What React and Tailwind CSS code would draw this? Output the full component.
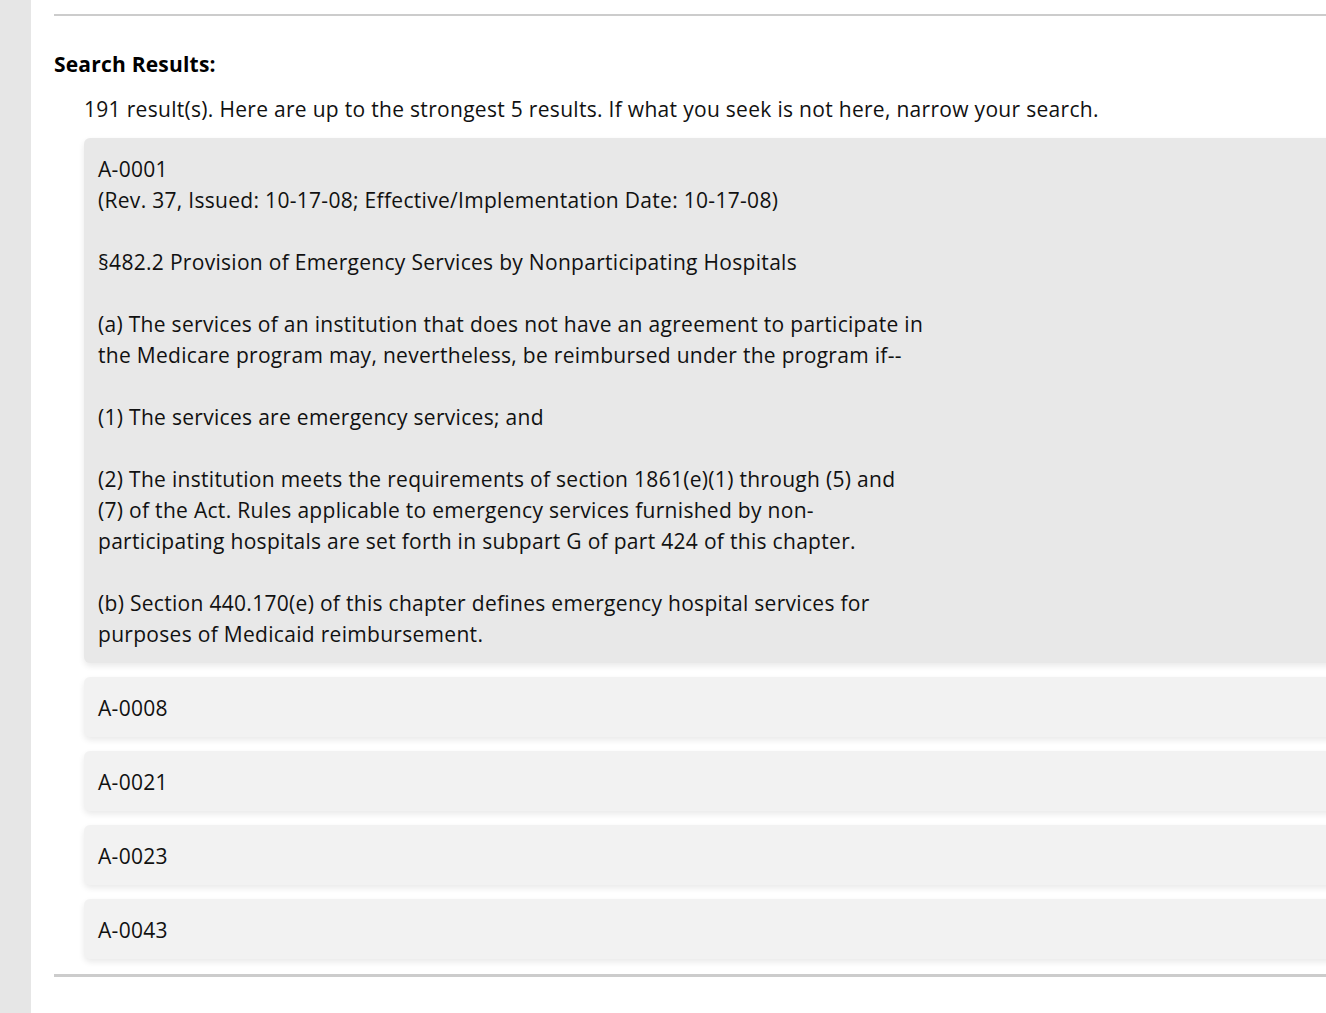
import React from "react";

const expanded = {
  id: "A-0001",
  paragraphs: [
    ["A-0001", "(Rev. 37, Issued: 10-17-08; Effective/Implementation Date: 10-17-08)"],
    ["§482.2 Provision of Emergency Services by Nonparticipating Hospitals"],
    [
      "(a) The services of an institution that does not have an agreement to participate in",
      "the Medicare program may, nevertheless, be reimbursed under the program if--",
    ],
    ["(1) The services are emergency services; and"],
    [
      "(2) The institution meets the requirements of section 1861(e)(1) through (5) and",
      "(7) of the Act. Rules applicable to emergency services furnished by non-",
      "participating hospitals are set forth in subpart G of part 424 of this chapter.",
    ],
    [
      "(b) Section 440.170(e) of this chapter defines emergency hospital services for",
      "purposes of Medicaid reimbursement.",
    ],
  ],
};

const collapsed = ["A-0008", "A-0021", "A-0023", "A-0043"];

const ResultCard = ({ open, children }) => (
  <div
    className={
      "rounded-md pl-[14px] pr-4 pt-[16px] pb-[13px] shadow-[0_3px_6px_rgba(0,0,0,0.09)] " +
      (open ? "bg-[#e8e8e8]" : "bg-[#f2f2f2]")
    }
  >
    {children}
  </div>
);

export default function App() {
  return (
    <div
      className="flex min-h-screen w-full overflow-hidden bg-white text-[#111]"
      style={{ fontFamily: '"Open Sans", "Noto Sans", sans-serif' }}
    >
      <div className="w-[31px] shrink-0 bg-[#e6e6e6]" />
      <div className="w-[1400px] shrink-0 pl-[23px] pt-[14px]">
        <div className="h-[2px] bg-[#cccccc]" />
        <h2 className="mt-[34px] text-[21px] font-bold leading-[28px] tracking-[0.2px] text-black">
          Search Results:
        </h2>
        <div className="pl-[30px] text-[21px] tracking-[0.3px]">
          <p className="mt-[16px] leading-[30px]">
            191 result(s). Here are up to the strongest 5 results. If what you seek is not here, narrow your search.
          </p>
          <div className="mt-[14px] flex flex-col gap-[14px] leading-[31px]">
            <ResultCard open>
              {expanded.paragraphs.map((lines, i) => (
                <div key={i} className={i > 0 ? "mt-[31px]" : ""}>
                  {lines.map((l) => (
                    <div key={l}>{l}</div>
                  ))}
                </div>
              ))}
            </ResultCard>
            {collapsed.map((id) => (
              <ResultCard key={id}>{id}</ResultCard>
            ))}
          </div>
        </div>
        <div className="mt-[15px] h-[3px] bg-[#cccccc]" />
      </div>
    </div>
  );
}
